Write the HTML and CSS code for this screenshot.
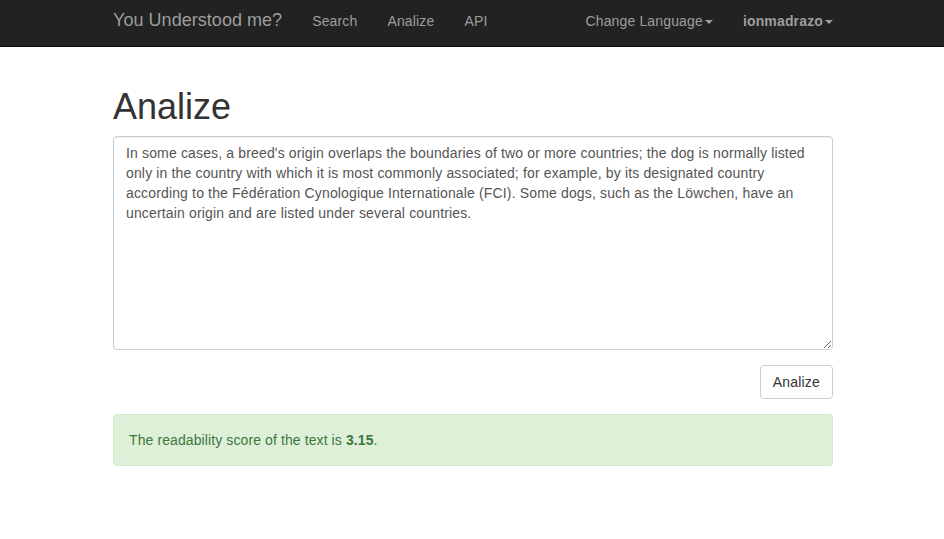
FILE: index.html
```html
<!DOCTYPE html>
<html lang="en">
<head>
<meta charset="utf-8">
<title>Analize</title>
<link rel="stylesheet" href="styles.css">
</head>
<body>
<nav class="navbar">
  <div class="nav-container">
    <a class="brand" href="#">You Understood me?</a>
    <ul class="nav">
      <li><a href="#">Search</a></li>
      <li><a href="#">Analize</a></li>
      <li><a href="#">API</a></li>
    </ul>
    <ul class="nav nav-right">
      <li><a href="#">Change Language<span class="caret"></span></a></li>
      <li><a href="#" class="user">ionmadrazo<span class="caret"></span></a></li>
    </ul>
  </div>
</nav>
<main class="container">
  <h1 class="title">Analize</h1>
  <textarea class="form-control" rows="10">In some cases, a breed's origin overlaps the boundaries of two or more countries; the dog is normally listed only in the country with which it is most commonly associated; for example, by its designated country according to the Fédération Cynologique Internationale (FCI). Some dogs, such as the Löwchen, have an uncertain origin and are listed under several countries.</textarea>
  <div class="actions">
    <button class="btn" type="button">Analize</button>
  </div>
  <div class="alert">The readability score of the text is <b>3.15</b>.</div>
</main>
</body>
</html>
```

FILE: styles.css
```css
* { box-sizing: border-box; }
html, body { margin: 0; padding: 0; }
body {
  font-family: "Liberation Sans", Arial, Helvetica, sans-serif;
  font-size: 14px;
  line-height: 1.42857143;
  letter-spacing: 0.1px;
  color: #333;
  background: #fff;
}
a { text-decoration: none; }

.navbar {
  background: #222;
  border-bottom: 1px solid #080808;
  height: 47px;
}
.nav-container {
  width: 750px;
  margin: 0 auto;
  padding: 0 14px 0 16px;
  display: flex;
  align-items: flex-start;
  height: 46px;
}
.brand {
  margin-left: -15px;
  padding: 10px 15px;
  font-size: 18px;
  line-height: 20px;
  letter-spacing: 0.04px;
  color: #9d9d9d;
}
.nav {
  list-style: none;
  margin: 0;
  padding: 0;
  display: flex;
}
.nav a {
  display: block;
  padding: 11px 15px 15px;
  line-height: 20px;
  color: #9d9d9d;
  letter-spacing: 0.15px;
}
.nav-right {
  margin-left: auto;
  margin-right: -15px;
}
.nav a.user { font-weight: bold; letter-spacing: 0.15px; }
.caret {
  display: inline-block;
  width: 0;
  height: 0;
  margin-left: 2px;
  vertical-align: middle;
  border-top: 4px dashed;
  border-right: 4px solid transparent;
  border-left: 4px solid transparent;
}

.container {
  width: 750px;
  margin: 0 auto;
  padding: 18px 14px 0 16px;
}
.title {
  font-size: 36px;
  font-weight: 500;
  line-height: 1.1;
  letter-spacing: 0;
  margin: 22px 0 9px;
  color: #333;
}
.form-control {
  display: block;
  width: 100%;
  height: 214px;
  padding: 6px 12px;
  font-family: inherit;
  font-size: 14px;
  line-height: 1.42857143;
  letter-spacing: 0.15px;
  color: #555;
  background: #fff;
  border: 1px solid #ccc;
  border-radius: 4px;
  box-shadow: inset 0 1px 1px rgba(0,0,0,.075);
  margin-top: 2px;
  resize: vertical;
  overflow: auto;
}
.actions {
  display: flex;
  justify-content: flex-end;
  margin-top: 15px;
}
.btn {
  font-family: inherit;
  font-size: 14px;
  line-height: 20px;
  letter-spacing: 0.2px;
  padding: 6px 12px;
  color: #333;
  background: #fff;
  border: 1px solid #ccc;
  border-radius: 4px;
  cursor: pointer;
}
.alert {
  margin-top: 15px;
  padding: 15px;
  background: #dff0d8;
  border: 1px solid #d6e9c6;
  border-radius: 4px;
  color: #3c763d;
}
```
